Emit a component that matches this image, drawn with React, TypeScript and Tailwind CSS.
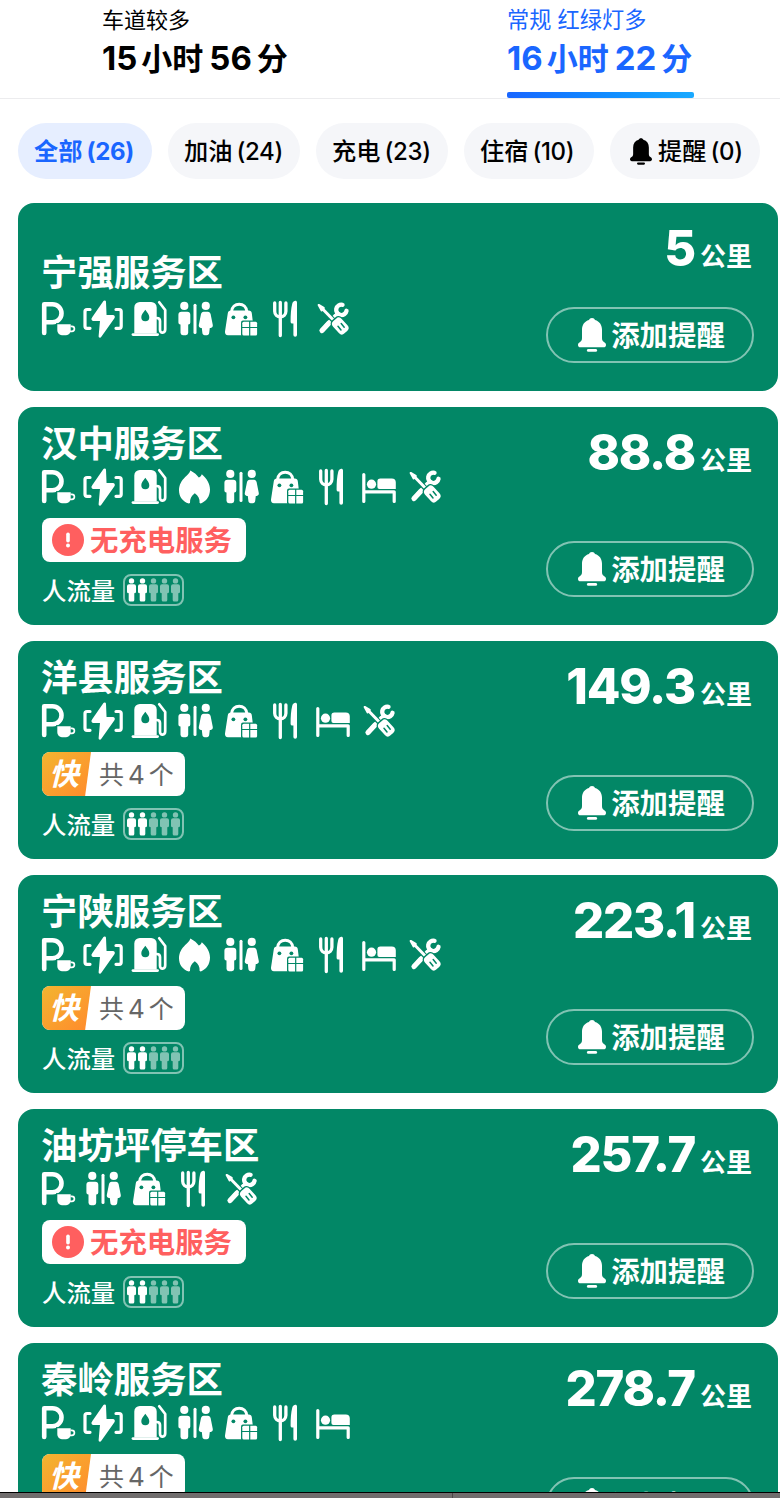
import React from 'react';

type Facility = 'parking' | 'charge' | 'fuel' | 'gas' | 'toilet' | 'shop' | 'food' | 'hotel' | 'repair';

interface ServiceArea {
  name: string;
  distance: string;
  facilities: Facility[];
  fastChargers?: number;
  noCharging?: boolean;
  crowd?: number;
}

const GREEN = '#028766';

const areas: ServiceArea[] = [
  { name: '宁强服务区', distance: '5', facilities: ['parking', 'charge', 'fuel', 'toilet', 'shop', 'food', 'repair'] },
  { name: '汉中服务区', distance: '88.8', facilities: ['parking', 'charge', 'fuel', 'gas', 'toilet', 'shop', 'food', 'hotel', 'repair'], noCharging: true, crowd: 2 },
  { name: '洋县服务区', distance: '149.3', facilities: ['parking', 'charge', 'fuel', 'toilet', 'shop', 'food', 'hotel', 'repair'], fastChargers: 4, crowd: 2 },
  { name: '宁陕服务区', distance: '223.1', facilities: ['parking', 'charge', 'fuel', 'gas', 'toilet', 'shop', 'food', 'hotel', 'repair'], fastChargers: 4, crowd: 2 },
  { name: '油坊坪停车区', distance: '257.7', facilities: ['parking', 'toilet', 'shop', 'food', 'repair'], noCharging: true, crowd: 2 },
  { name: '秦岭服务区', distance: '278.7', facilities: ['parking', 'charge', 'fuel', 'toilet', 'shop', 'food', 'hotel'], fastChargers: 4, crowd: 2 },
];

const filters = [
  { label: '全部', count: 26, active: true },
  { label: '加油', count: 24 },
  { label: '充电', count: 23 },
  { label: '住宿', count: 10 },
  { label: '提醒', count: 0, bell: true },
];

const facilityShapes: Record<Facility, React.ReactNode> = {
  parking: (
    <>
      <path d="M8.2 34V5.3h8.3a9 9 0 0 1 0 18H8.2" fill="none" stroke="white" strokeWidth="4.6" strokeLinecap="round" strokeLinejoin="round" />
      <path d="M20 24.2h16v13H20z" fill={GREEN} />
      <path d="M21.3 25.2h13.4v5.6c0 3.2-2 5.4-4.6 5.4h-4.2c-2.6 0-4.6-2.2-4.6-5.4z" />
      <path d="M34.5 27.3h1.4a2.5 2.5 0 0 1 0 5h-2" fill="none" stroke="white" strokeWidth="1.7" />
    </>
  ),
  charge: (
    <>
      <path d="M8 10.5H5a2 2 0 0 0-2 2v14.8a2 2 0 0 0 2 2h3M34 10.5h3.2a2 2 0 0 1 2 2v14.8a2 2 0 0 1-2 2H34" fill="none" stroke="white" strokeWidth="3.2" strokeLinecap="round" />
      <path d="M22.6 2.8 11 19.6a.6.6 0 0 0 .5 1h8L18 37.3l13.3-18.9a.6.6 0 0 0-.5-1h-7.6z" stroke="white" strokeWidth="2.8" strokeLinejoin="round" />
    </>
  ),
  fuel: (
    <>
      <path d="M6.3 34.5V8.500A5.5 5.5 0 0 1 11.8 3h11.4a5.5 5.5 0 0 1 5.500 5.500v26z" />
      <path d="M5 35.6h24.6" stroke="white" strokeWidth="2.8" strokeLinecap="round" />
      <path d="M17.3 10.8c2.400 3.100 4 5.100 4 7.400a4 4 0 0 1-8 0c0-2.300 1.600-4.300 4-7.400z" fill={GREEN} />
      <path d="m31.2 3.2 6 7.8v19.3c0 4-5.200 4.600-5.200.4V22c0-2-1-3-3.300-3" fill="none" stroke="white" strokeWidth="2.7" strokeLinecap="round" strokeLinejoin="round" />
    </>
  ),
  gas: (
    <path d="M16.4 3.4c4 2.2 6.6 4.4 8.4 7.2 1.5-.6 2.5-1.7 3-3.3C33 11.8 36 17 36 22.8c0 6.5-3.8 11.6-9.2 13.7l-1.2-.4c.3-4.5-1.3-7.3-4.8-9.8-3.4 2.6-5 5.5-4.8 9.8l-1.2.4C8.5 34.5 5 29.4 5 23.2c0-5.6 2.6-9.6 6.2-13.3 2.3-2.2 4.2-3.6 5.2-6.5z" />
  ),
  toilet: (
    <>
      <circle cx="10.3" cy="6.9" r="4.1" />
      <path d="M7.5 12.7h5.7a3.1 3.1 0 0 1 3.1 3.1v7.7a2 2 0 0 1-2.1 2v8.3a2.4 2.4 0 0 1-2.4 2.4H8.9a2.4 2.4 0 0 1-2.4-2.4v-8.3a2 2 0 0 1-2.1-2v-7.7a3.1 3.1 0 0 1 3.1-3.1z" />
      <path d="M21 6.2v27.3" stroke="white" strokeWidth="3" strokeLinecap="round" />
      <circle cx="31.8" cy="6.9" r="4.1" />
      <path d="M29.7 12.7h4.2c1.6 0 2.3.9 2.7 2.4l2.2 11c.2 1.6-.5 2.6-2 2.8l-1 .2-.6 5c-.2 1.4-1 2.1-2.3 2.1h-2.2c-1.3 0-2.1-.7-2.3-2.1l-.6-5-1-.2c-1.5-.2-2.2-1.2-2-2.8l2.2-11c.4-1.5 1.1-2.4 2.7-2.4z" />
    </>
  ),
  shop: (
    <>
      <path d="M11.5 13c.4-5.2 3.8-7.7 7.7-7.7s7.3 2.5 7.7 7.7" fill="none" stroke="white" strokeWidth="3" />
      <path d="M11 11.5h17.7a3.2 3.2 0 0 1 3.1 2.8L34 32.5c.2 2.2-.9 3.7-3 3.7H8c-2.1 0-3.2-1.5-3-3.7l2.8-18.2a3.2 3.2 0 0 1 3.2-2.8z" />
      <circle cx="13.4" cy="18.3" r="1.9" fill={GREEN} />
      <circle cx="25.4" cy="18.3" r="1.9" fill={GREEN} />
      <rect x="21" y="21.5" width="17.3" height="16.3" rx="2" fill={GREEN} />
      <rect x="22.3" y="22.8" width="14.8" height="13.8" rx="1.5" />
      <path d="M29.7 22v15M22 28.5h16" stroke={GREEN} strokeWidth="1.2" />
    </>
  ),
  food: (
    <>
      <path d="M8.7 4v8.3a5.6 5.6 0 0 0 11.2 0V4M14.3 3.5v33" fill="none" stroke="white" strokeWidth="3.3" strokeLinecap="round" />
      <path d="M31 3.4V36a1.8 1.8 0 0 1-3.6 0V24.5h-1c-1.2 0-1.8-.6-1.8-1.8 0-7.4.4-13.2 1.7-18.3.9-3.1 4.7-3.5 4.7-1z" />
    </>
  ),
  hotel: (
    <>
      <path d="M5.8 7.5v27M5.8 24.8h30.4v9.7" fill="none" stroke="white" strokeWidth="3.2" strokeLinecap="round" strokeLinejoin="round" />
      <circle cx="13.5" cy="17.2" r="4.6" />
      <path d="M22.4 11.4h11.4a4 4 0 0 1 4 4V22H21.4a2 2 0 0 1-2-2v-5.5a3 3 0 0 1 3-3.1z" />
    </>
  ),
  repair: (
    <>
      <path d="m10 31.5 7-7.500" stroke="white" strokeWidth="5.2" strokeLinecap="round" />
      <path d="m14 27 10-11" stroke="white" strokeWidth="4" />
      <path d="M30.500 5.800a5.200 5.200 0 1 0 4 6" fill="none" stroke="white" strokeWidth="4.4" strokeLinecap="round" />
      <path d="m21.5 17.5 4-6 5 5-4 3z" />
      <path d="m10 9.5 13 13.5" stroke={GREEN} strokeWidth="5.4" />
      <path d="m9 8.2 15 15.5" stroke="white" strokeWidth="3" />
      <path d="m6.700 6 5 3-2 2.400z" stroke="white" strokeWidth="2.2" strokeLinejoin="round" />
      <rect x="18.600" y="20.200" width="19.400" height="13.600" rx="4.500" transform="rotate(48 28.300 27)" fill={GREEN} />
      <rect x="20" y="21.200" width="16.600" height="11.600" rx="4" transform="rotate(48 28.300 27)" />
      <path d="m26 27.300 3 3.700M29.200 24.500l3 3.700" stroke={GREEN} strokeWidth="1.500" strokeLinecap="round" />
    </>
  ),
};

const FacilityIcon: React.FC<{ kind: Facility }> = ({ kind }) => (
  <svg className="w-[46px] h-10 shrink-0" viewBox="0 0 46 40" fill="white">{facilityShapes[kind]}</svg>
);

const Bell: React.FC<{ className: string }> = ({ className }) => (
  <svg className={className} viewBox="0 0 28 34" fill="currentColor">
    <path d="M14 0c1.600 0 2.600.8 3 2 4.600 1.300 7 5 7 9.800v8c0 2 .4 3.300 2 4.300 1.300.8 2 1.800 2 2.900 0 1.400-1 2.300-2.400 2.300H2.400C1 29.300 0 28.400 0 27c0-1.100.7-2.100 2-2.900 1.600-1 2-2.300 2-4.300v-8C4 7 6.400 3.300 11 2c.4-1.200 1.400-2 3-2z" />
    <path d="M10.300 32.400h7.400" stroke="currentColor" strokeWidth="2.8" strokeLinecap="round" />
  </svg>
);

const RouteTime: React.FC<{ hours: number; minutes: number }> = ({ hours, minutes }) => (
  <div className="flex items-baseline gap-1 h-10 leading-10 pt-0.5 font-bold text-[31px] whitespace-nowrap">
    <span className="text-[33px]">{hours}</span>
    <span>小时</span>
    <span className="text-[33px] ml-0.5">{minutes}</span>
    <span className="ml-px">分</span>
  </div>
);

const CrowdMeter: React.FC<{ level: number }> = ({ level }) => (
  <div className="flex items-center mt-3 h-8">
    <span className="text-[24.4px] leading-8 font-medium text-white pt-px">人流量</span>
    <div className="ml-2 w-[61px] h-8 rounded-lg border-2 border-white/50 flex items-center justify-center gap-0.5">
      {[0, 1, 2, 3, 4].map((i) => (
        <svg key={i} className={i < level ? 'w-[9px] h-6 text-white' : 'w-[9px] h-6 text-white/50'} viewBox="0 0 9 24" fill="currentColor">
          <circle cx="4.5" cy="2.9" r="2.7" />
          <path d="M2 6.2h5a2 2 0 0 1 2 2v5.6A1.3 1.3 0 0 1 7.300 15v7a1.500 1.500 0 0 1-1.500 1.500H3.200A1.500 1.500 0 0 1 1.700 22v-7A1.300 1.300 0 0 1 0 13.800V8.200a2 2 0 0 1 2-2z" />
        </svg>
      ))}
    </div>
  </div>
);

const NoChargingBadge = () => (
  <div className="mt-[11px] h-11 w-[204px] bg-white rounded-lg flex items-center pl-2.5 text-[#ff5f5f]">
    <svg className="w-8 h-8 shrink-0" viewBox="0 0 32 32">
      <circle cx="16" cy="16" r="16" fill="currentColor" />
      <path d="M16 10.2v6.6" stroke="white" strokeWidth="3.6" strokeLinecap="round" />
      <circle cx="16" cy="21.5" r="2" fill="white" />
    </svg>
    <span className="ml-1.5 pt-0.5 text-[28.4px] leading-10 font-bold whitespace-nowrap">无充电服务</span>
  </div>
);

const FastBadge: React.FC<{ count: number }> = ({ count }) => (
  <div className="mt-[11px] h-11 w-[143px] bg-white rounded-lg overflow-hidden flex items-center">
    <div className="w-[49px] h-full bg-linear-to-br from-[#f2b530] to-[#ff8a2c] [clip-path:polygon(0_0,100%_0,88%_100%,0_100%)] flex items-center pl-[7px]">
      <span className="italic font-bold text-[30px] leading-10 text-white">快</span>
    </div>
    <div className="flex items-baseline gap-1 pl-2 pt-0.5 leading-10 text-[25px] text-[#666]">
      <span>共</span>
      <span className="text-[26px]">{count}</span>
      <span>个</span>
    </div>
  </div>
);

const AreaCard: React.FC<{ area: ServiceArea }> = ({ area }) => {
  const hasDetails = area.crowd !== undefined;
  return (
    <div className={`${hasDetails ? 'h-[218px]' : 'h-[188px]'} shrink-0 bg-[#028766] rounded-2xl pl-6 pr-6 flex justify-between text-white`}>
      <div className={hasDetails ? 'pt-3.5' : 'pt-[47px]'}>
        <h3 className={`text-[36.4px] leading-[47px] -mb-px -ml-px font-bold whitespace-nowrap ${hasDetails ? '' : 'pb-[3px]'}`}>{area.name}</h3>
        <div className="flex -ml-1.5">
          {area.facilities.map((f) => <FacilityIcon key={f} kind={f} />)}
        </div>
        {area.noCharging && <NoChargingBadge />}
        {area.fastChargers && <FastBadge count={area.fastChargers} />}
        {area.crowd !== undefined && <CrowdMeter level={area.crowd} />}
      </div>
      <div className="flex flex-col justify-between items-end pt-4 pb-7">
        <div className="flex items-baseline gap-[5px] pr-0.5 h-[60px] leading-[60px] font-bold">
          <span className="text-[49px] font-extrabold tracking-[-1.2px]">{area.distance}</span>
          <span className="text-[26px]">公里</span>
        </div>
        <button className="w-52 h-14 rounded-full border-2 border-white/50 flex items-center justify-center gap-[5px] pl-[3px] text-[28.4px] leading-10 font-bold">
          <Bell className="w-7 h-[34px]" />
          <span className="pt-0.5">添加提醒</span>
        </button>
      </div>
    </div>
  );
};

const App = () => {
  return (
    <div className="w-[780px] h-[1498px] overflow-hidden flex flex-col bg-white text-black font-['Inter','Noto_Sans_CJK_SC',sans-serif]">
      <div className="h-[99px] shrink-0 border-b border-[#ececee] flex">
        <div className="w-[507px] pl-[102px] pt-1">
          <div className="text-[22px] leading-8">车道较多</div>
          <RouteTime hours={15} minutes={56} />
        </div>
        <div className="w-[187px] pt-1 text-[#1a66ff] flex flex-col">
          <div className="text-[22.2px] leading-8 whitespace-nowrap">常规 红绿灯多</div>
          <RouteTime hours={16} minutes={22} />
          <div className="mt-auto h-1.5 shrink-0 rounded-[2px] bg-linear-to-r from-[#1a66ff] to-[#1aa9ff]" />
        </div>
      </div>

      <div className="pt-6 pl-[18px] flex gap-4 shrink-0">
        {filters.map((f) => (
          <div
            key={f.label}
            className={`h-14 px-4 rounded-full flex items-center whitespace-nowrap text-2xl ${f.active ? 'w-[134px] bg-[#e6eeff] text-[#1a66ff] font-bold' : f.bell ? 'w-[150px] pl-5 bg-[#f5f6f9]' : f.count === 10 ? 'w-[130px] bg-[#f5f6f9]' : 'w-[132px] bg-[#f5f6f9]'} ${f.active ? '' : 'font-medium'}`}
          >
            {f.bell && <Bell className="w-[22px] h-[27px] mr-1.5" />}
            <span className="pt-0.5 text-[24.2px]">{f.label}</span>
            <span className="ml-1 pt-0.5 tracking-[-0.3px]">({f.count})</span>
          </div>
        ))}
      </div>

      <div className="flex-1 min-h-0 overflow-hidden mt-6 pl-[18px] pr-0.5 flex flex-col gap-4">
        {areas.map((a) => <AreaCard key={a.name} area={a} />)}
      </div>
      <div className="h-1.5 shrink-0 border-t border-black bg-[#706d6d] flex">
        <div className="w-[453px] border-r border-[#4a4848]" />
      </div>
    </div>
  );
};

export default App;
